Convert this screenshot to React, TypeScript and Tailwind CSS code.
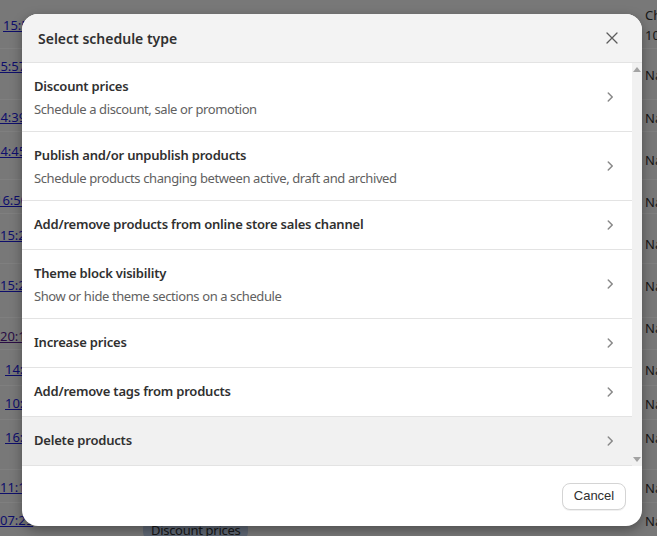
import React from "react";

type PageRow = {
  cls: string;
  time: string;
  timeCls: string;
  visited?: boolean;
  rightCls: string;
  right: string[];
  badge?: boolean;
};

const pageRows: PageRow[] = [
  { cls: "h-[49px]", time: "15:58", timeCls: "pt-[16px] ml-[3px]", rightCls: "pt-[5px]", right: ["Ch", "10"] },
  { cls: "h-[51px]", time: "15:57", timeCls: "pt-[8px] ml-[-7px]", rightCls: "pt-[16px]", right: ["Na"] },
  { cls: "h-[32px]", time: "14:39", timeCls: "pt-[8px] ml-[-7px]", rightCls: "pt-[8px]", right: ["Na"] },
  { cls: "h-[48px]", time: "14:45", timeCls: "pt-[10px] ml-[-7px]", rightCls: "pt-[18px]", right: ["Na"] },
  { cls: "h-[34px]", time: "16:50", timeCls: "pt-[11px] ml-[-5px]", rightCls: "pt-[12px]", right: ["Na"] },
  { cls: "h-[50px]", time: "15:21", timeCls: "pt-[12px] ml-0", rightCls: "pt-[20px]", right: ["Na"] },
  { cls: "h-[54px]", time: "15:22", timeCls: "pt-[12px] ml-0", rightCls: "pt-[12px]", right: ["Na"] },
  { cls: "h-[32px]", time: "20:14", timeCls: "pt-[9px] ml-0", visited: true, rightCls: "pt-0", right: ["Na"] },
  { cls: "h-[36px]", time: "14:44", timeCls: "pt-[10px] ml-[5px]", rightCls: "pt-[10px]", right: ["Na"] },
  { cls: "h-[34px]", time: "10:52", timeCls: "pt-[8px] ml-[5px]", rightCls: "pt-[8px]", right: ["Na"] },
  { cls: "h-[50px]", time: "16:08", timeCls: "pt-[8px] ml-[5px]", rightCls: "pt-[8px]", right: ["Na"] },
  { cls: "h-[33px]", time: "11:13", timeCls: "pt-[8px] ml-0", rightCls: "pt-[8px]", right: ["Na"] },
  { cls: "h-[40px]", time: "07:29", timeCls: "pt-[8px] ml-0", rightCls: "pt-[8px]", right: ["Na"], badge: true },
];

type ScheduleType = { title: string; desc?: string; active?: boolean };

const scheduleTypes: ScheduleType[] = [
  { title: "Discount prices", desc: "Schedule a discount, sale or promotion" },
  { title: "Publish and/or unpublish products", desc: "Schedule products changing between active, draft and archived" },
  { title: "Add/remove products from online store sales channel" },
  { title: "Theme block visibility", desc: "Show or hide theme sections on a schedule" },
  { title: "Increase prices" },
  { title: "Add/remove tags from products" },
  { title: "Delete products", active: true },
];

function ChevronRight() {
  return (
    <svg viewBox="0 0 20 20" className="h-5 w-5 shrink-0 fill-[#8a8a8a]">
      <path d="M7.72 14.53a.75.75 0 0 1 0-1.06l3.47-3.47-3.47-3.47a.75.75 0 0 1 1.06-1.06l4 4a.75.75 0 0 1 0 1.06l-4 4a.75.75 0 0 1-1.06 0Z" />
    </svg>
  );
}

function CloseIcon() {
  return (
    <svg viewBox="0 0 12 12" className="h-3 w-3" fill="none" stroke="#5c5c5c" strokeWidth="1.3" strokeLinecap="round">
      <path d="M1 1 L11 11 M11 1 L1 11" />
    </svg>
  );
}

function ScrollTrack() {
  return (
    <div className="flex w-[10px] shrink-0 flex-col items-center justify-between bg-[#f1f1f1] py-[4px]">
      <svg viewBox="0 0 8 5" className="h-[5px] w-[8px] fill-[#a3a3a3]">
        <path d="M4 0 L8 5 L0 5 Z" />
      </svg>
      <svg viewBox="0 0 8 5" className="h-[5px] w-[8px] fill-[#a3a3a3]">
        <path d="M0 0 L8 0 L4 5 Z" />
      </svg>
    </div>
  );
}

export default function App() {
  return (
    <div className="relative h-[536px] w-full overflow-hidden bg-[#f0f0f0] font-['Noto_Sans',sans-serif] text-[13px]">
      {/* page behind the dialog */}
      <div className="flex flex-col">
        {pageRows.map((r, i) => (
          <div key={i} className={`flex shrink-0 border-b border-white ${r.cls}`}>
            <div className="w-[143px] shrink-0 overflow-hidden whitespace-nowrap leading-[18px]">
              <div className={r.timeCls}>
                <span className={r.visited ? "text-[#551a8b] underline" : "text-[#1c1cd8] underline"}>{r.time}</span>
              </div>
            </div>
            <div className="flex-1">
              {r.badge && (
                <div className="pt-[17px]">
                  <span className="inline-block rounded-lg bg-[#bccde6] px-2 leading-[20px] tracking-[-0.3px] text-[#303030]">
                    Discount prices
                  </span>
                </div>
              )}
            </div>
            <div className={`w-[12px] shrink-0 overflow-hidden whitespace-nowrap leading-5 text-[#303030] ${r.rightCls}`}>
              {r.right.map((t) => (
                <div key={t}>{t}</div>
              ))}
            </div>
          </div>
        ))}
      </div>

      {/* dim layer */}
      <div className="absolute inset-0 bg-black/50" />

      {/* dialog */}
      <div className="absolute left-[22px] top-[14px] flex h-[512px] w-[620px] flex-col overflow-hidden rounded-2xl bg-white shadow-[0_4px_12px_rgba(0,0,0,0.35)]">
        <div className="flex h-[49px] shrink-0 items-center justify-between border-b border-[#e3e3e3] bg-[#f3f3f3] pl-4 pr-6">
          <h2 className="text-[14px] font-semibold text-[#303030]">Select schedule type</h2>
          <button className="flex h-3 w-3 items-center justify-center">
            <CloseIcon />
          </button>
        </div>

        <div className="flex min-h-0 flex-1">
          <div className="flex flex-1 flex-col">
            {scheduleTypes.map((t) => (
              <div
                key={t.title}
                className={`flex items-center border-b border-[#e3e3e3] pl-3 pr-3 ${t.active ? "bg-[#f1f1f1]" : "bg-white"} ${t.desc ? "h-[69px]" : "h-[49px]"}`}
              >
                <div className={t.desc ? "flex-1" : "mb-[3px] flex-1"}>
                  <div className="font-semibold leading-5 tracking-[-0.2px] text-[#303030]">{t.title}</div>
                  {t.desc && <div className="mt-[3px] leading-5 tracking-[-0.4px] text-[#616161]">{t.desc}</div>}
                </div>
                <ChevronRight />
              </div>
            ))}
          </div>
          <ScrollTrack />
        </div>

        <div className="flex h-[60px] shrink-0 items-center justify-end px-4">
          <button className="h-[27px] w-[64px] rounded-lg border border-[#d4d4d4] bg-white font-['Liberation_Sans',sans-serif] text-[13px] text-[#303030] shadow-[0_1px_0_rgba(0,0,0,0.06)]">
            Cancel
          </button>
        </div>
      </div>
    </div>
  );
}
